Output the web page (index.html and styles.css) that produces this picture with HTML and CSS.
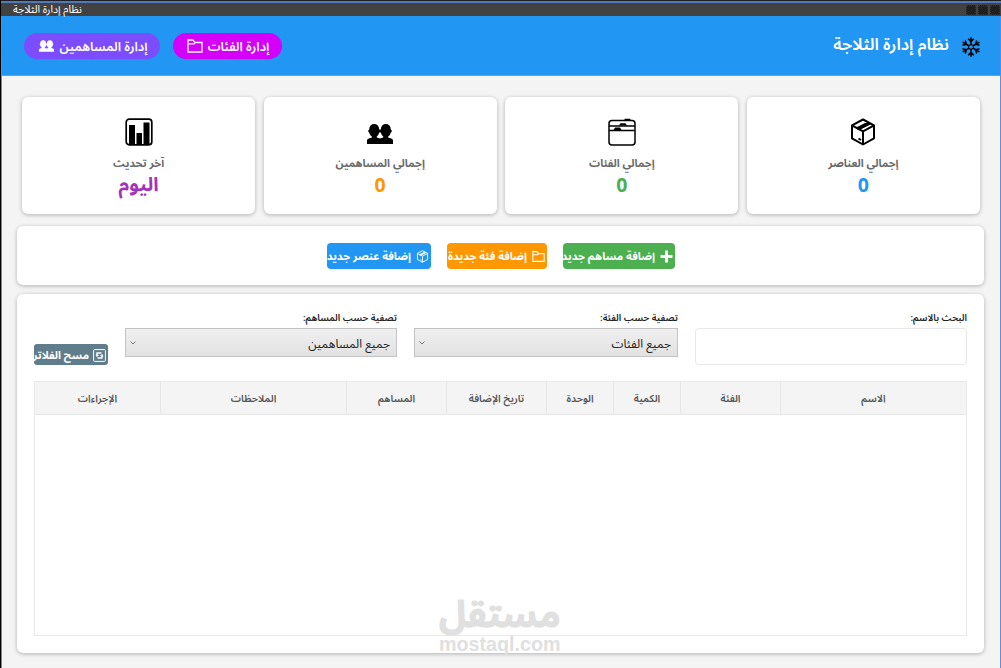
FILE: index.html
```html
<!DOCTYPE html>
<html lang="ar" dir="rtl">
<head>
<meta charset="utf-8">
<title>نظام إدارة الثلاجة</title>
<link rel="stylesheet" href="styles.css">
</head>
<body>
<svg class="defs" width="0" height="0" aria-hidden="true">
  <symbol id="folder" viewBox="0 0 16 14"><path d="M1 13V1h5l2 2.500H15V13zM1 4.800h6l1.500-1.300" fill="none" stroke="currentColor" stroke-width="1.300"/></symbol>
  <symbol id="people" viewBox="0 0 26 20"><g fill="currentColor"><rect x="2.300" y="0" width="9.800" height="13" rx="4.700"/><rect x="13.900" y="0" width="9.800" height="13" rx="4.700"/><rect x="1.200" y="5.500" width="23.600" height="3" rx="1.500"/><path d="M4.800 10h5v3.500l3.200 1 3.200-1V10h5v3.500l3 1q1.800.5 1.800 2V20H0v-3.500q0-1.500 1.800-2l3-1z"/></g></symbol>
  <symbol id="box" viewBox="0 0 26 28"><g fill="none" stroke="currentColor" stroke-width="2" stroke-linejoin="round"><path d="M13 1.500l11 5.800v13L13 26.500l-11-6.200v-13zM2 7.300l11 6 11-6M13 13.300v13M7 10.200L18.500 4.400"/><path d="M6.500 10.500l2.500 1.300L20.500 6 18 4.500z" fill="currentColor" stroke-width="1"/><path d="M8.500 20.500l2.500 1.500"/></g></symbol>
</svg>
<div class="window">
  <div class="titlebar"><div class="controls"><i></i><i></i><i></i></div><span class="t caption">نظام إدارة الثلاجة</span></div>
  <header class="header">
    <div class="brand">
      <svg class="snow" viewBox="0 0 20 20"><g fill="none" stroke="#000" stroke-width="1.500"><path id="arm" d="M10 7.500V.3M7.200 1.800l2.800 2.800 2.800-2.800"/><use href="#arm" transform="rotate(60 10 10)"/><use href="#arm" transform="rotate(120 10 10)"/><use href="#arm" transform="rotate(180 10 10)"/><use href="#arm" transform="rotate(240 10 10)"/><use href="#arm" transform="rotate(300 10 10)"/><path d="M10 7.400l2.300 1.300v2.600L10 12.600l-2.300-1.300V8.700z" stroke-width="1.100"/></g></svg>
      <h1 class="t title">نظام إدارة الثلاجة</h1>
    </div>
    <nav class="nav">
      <button class="pill pink"><span class="t">إدارة الفئات</span><svg class="i-folder"><use href="#folder"/></svg></button>
      <button class="pill violet"><span class="t">إدارة المساهمين</span><svg class="i-people"><use href="#people"/></svg></button>
    </nav>
  </header>
  <main class="main">
    <section class="stats">
      <article class="card stat"><svg class="icon" viewBox="0 0 28 28"><use href="#box" x="1" width="26" height="28"/></svg><span class="t label">إجمالي العناصر</span><b class="value blue">0</b></article>
      <article class="card stat"><svg class="icon" viewBox="0 0 28 28"><g fill="none" stroke="#000" stroke-width="1.500"><path d="M1 12.500h26M1.500 8h25M4 2.600h20q3 0 3 3V24q0 3-3 3H4q-3 0-3-3V5.600q0-3 3-3z"/></g><path d="M15.500 3l1.500-2.300h5L23.500 3zM11 7.500l1.500-2.300h5L19 7.500zM5.500 12L7 9.500h5l1.500 2.500z"/></svg><span class="t label">إجمالي الفئات</span><b class="value green">0</b></article>
      <article class="card stat"><svg class="icon" viewBox="0 0 28 28"><use href="#people" x="1" y="6" width="26" height="20"/></svg><span class="t label">إجمالي المساهمين</span><b class="value orange">0</b></article>
      <article class="card stat"><svg class="icon" viewBox="0 0 28 28"><rect x="1.200" y="1.200" width="25.600" height="25.600" rx="3" fill="none" stroke="#000" stroke-width="1.700"/><path d="M4 7h6v20H4zM11.500 15h5.500v12h-5.500zM18.500 4.500h6V27h-6z"/></svg><span class="t label">آخر تحديث</span><b class="t value purple">اليوم</b></article>
    </section>
    <section class="card actions">
      <button class="btn b-green"><svg viewBox="0 0 12 12"><path d="M6 .5v11M.5 6h11" stroke="#fff" stroke-width="2.800"/></svg><span class="t">إضافة مساهم جديد</span></button>
      <button class="btn b-orange"><svg viewBox="0 0 16 14"><use href="#folder"/></svg><span class="t">إضافة فئة جديدة</span></button>
      <button class="btn b-blue"><svg viewBox="0 0 26 28"><use href="#box"/></svg><span class="t">إضافة عنصر جديد</span></button>
    </section>
    <section class="card data">
      <div class="filters">
        <label class="field f-name"><span class="t">البحث بالاسم:</span><span class="input"></span></label>
        <label class="field f-cat"><span class="t">تصفية حسب الفئة:</span><span class="select"><span class="t">جميع الفئات</span><svg viewBox="0 0 6 4"><path d="M.5.500L3 3 5.500.500" fill="none" stroke="#777"/></svg></span></label>
        <label class="field f-con"><span class="t">تصفية حسب المساهم:</span><span class="select"><span class="t">جميع المساهمين</span><svg viewBox="0 0 6 4"><path d="M.5.500L3 3 5.500.500" fill="none" stroke="#777"/></svg></span></label>
        <button class="clear"><svg viewBox="0 0 13 13"><g fill="none" stroke="#fff"><rect x=".6" y=".6" width="11.800" height="11.800" rx="1"/><path d="M4 7V4h4.500M9 6v3H4.500M3 5.500L4 7l1.500-1M7.500 7L9 6l1 1.500" stroke-width="1.300"/></g></svg><span class="t">مسح الفلاتر</span></button>
      </div>
      <div class="table">
        <div class="row">
          <span>الاسم</span><span>الفئة</span><span>الكمية</span><span>الوحدة</span><span>تاريخ الإضافة</span><span>المساهم</span><span>الملاحظات</span><span>الإجراءات</span>
        </div>
      </div>
    </section>
  </main>
  <div class="watermark"><span class="t mark-ar">مستقل</span><span class="mark-en">mostaql.com</span></div>
</div>
</body>
</html>
```
FILE: styles.css
```css
* { box-sizing: border-box; }
body { margin: 0; width: 1001px; height: 668px; overflow: hidden; background: #f4f4f4; font-family: "Open Sans", "Noto Sans Arabic", "DejaVu Sans", sans-serif; }
button { border: 0; padding: 0; font: inherit; color: #fff; }
.defs { position: absolute; }
.t { display: inline-block; white-space: nowrap; flex: none; }
.window { position: relative; height: 668px; border-top: 1px solid #1c1f26; border-left: 1px solid #000; }
.titlebar { height: 15px; border-top: 2px solid #5379b8; background: #424242; color: #fff; display: flex; justify-content: space-between; align-items: center; padding: 0 1px 0 12px; font-size: 10.600px; line-height: 12px; }
.caption { margin-top: -1px; }
.controls { display: flex; gap: 2px; }
.controls i { width: 10px; height: 10px; background: #202020; border: 1px dotted #353535; }
.header { height: 60px; background: #2196f3; border: solid #4d8df0; border-width: 0 1px; border-bottom: 1px solid #55a5ee; display: flex; justify-content: space-between; align-items: flex-start; padding: 0 19px 0 22px; color: #fff; }
.brand { display: flex; gap: 12px; }
.snow { width: 20px; height: 20px; margin-top: 21px; }
.title { margin: 16px 0 0; font-size: 16.700px; line-height: 24px; font-weight: 600; }
.nav { display: flex; gap: 13px; margin-top: 17px; }
.pill { height: 26px; border-radius: 13px; display: flex; align-items: center; justify-content: center; gap: 5px; font-size: 12.800px; font-weight: 600; }
.pink { background: #d500f9; width: 109px; padding-left: 1px; }
.violet { background: #7c4dff; width: 136px; padding-left: 3px; }
.i-folder { width: 16px; height: 14px; }
.i-people { width: 15px; height: 12px; }
.main { border: solid #5b8df0; border-width: 0 1px; height: 592px; padding: 21px 16px 0 15px; }
.card { background: #fff; border-radius: 6px; box-shadow: 0 1px 4px rgba(0,0,0,.28); }
.stats { display: grid; grid-template-columns: repeat(4, 1fr); gap: 8.500px; padding: 0 4px 0 5px; }
.stat { height: 117px; padding-top: 21px; display: flex; flex-direction: column; align-items: center; }
.icon { width: 28px; height: 28px; }
.label { font-size: 10.900px; line-height: 18px; margin-top: 8px; color: #6a6a6a; font-weight: 700; }
.value { font-size: 19.500px; line-height: 24px; margin-top: 1px; font-family: "Noto Sans", "Noto Sans Arabic", "DejaVu Sans", sans-serif; }
.blue { color: #2196f3; } .green { color: #4caf50; } .orange { color: #ff9800; } .purple { color: #a334b8; }
.purple { margin-top: 0; }
.actions { height: 59px; margin-top: 12px; padding: 17px 309px 0; display: flex; gap: 16px; }
.btn { height: 26px; border-radius: 4px; display: flex; align-items: center; gap: 5px; padding-right: 2px; font-size: 11px; font-weight: 700; }
.btn svg { width: 13px; height: 13px; flex: none; }
.b-green { width: 112px; background: #4caf50; }
.b-orange { width: 100px; background: #ff9800; }
.b-blue { width: 104px; background: #2196f3; }
.data { height: 359px; margin-top: 9px; padding: 17px 17px 0; }
.filters { display: flex; gap: 17px; height: 70px; font-size: 9.500px; color: #222; }
.field { display: flex; flex-direction: column; align-items: flex-start; }
.field > .t { line-height: 14px; margin-bottom: 3px; font-weight: 600; }
.f-name { width: 272px; } .f-cat { width: 264px; } .f-con { width: 272px; }
.input { width: 100%; height: 37px; border: 1px solid #e8e8e8; border-radius: 4px; }
.select { width: 100%; height: 29px; border: 1px solid #c4c4c4; background: linear-gradient(#efefef, #e2e2e2); display: flex; align-items: center; justify-content: space-between; padding: 3px 6px 0 4px; font-size: 12px; }
.select svg { width: 6px; height: 4px; margin-bottom: 3px; }
.clear { width: 74px; height: 21px; margin-top: 33px; background: #607d8b; border-radius: 3px; display: flex; align-items: center; gap: 4px; padding: 2px 2px 0 0; font-size: 10.800px; font-weight: 700; }
.clear svg { width: 13px; height: 13px; flex: none; }
.table { height: 255px; border: 1px solid #e9e9e9; }
.row { height: 33px; background: #f4f4f4; border-bottom: 1px solid #e6e6e6; display: grid; grid-template-columns: 186px 100px 67px 67px 100px 100px 186px 1fr; font-size: 10.200px; font-weight: 600; color: #555; }
.row span { display: flex; align-items: center; justify-content: center; border-left: 1px solid #e6e6e6; padding-top: 1px; }
.row span:last-child { border-left: 0; }
.watermark { position: absolute; left: 438px; top: 592px; width: 122px; color: #e0e0e0; direction: ltr; display: flex; flex-direction: column; }
.mark-ar { font-size: 36.500px; line-height: 41px; height: 41px; font-weight: 700; -webkit-text-stroke: 1px #e0e0e0; }
.mark-en { font: 700 19.700px/20px "Liberation Sans", sans-serif; }
```
